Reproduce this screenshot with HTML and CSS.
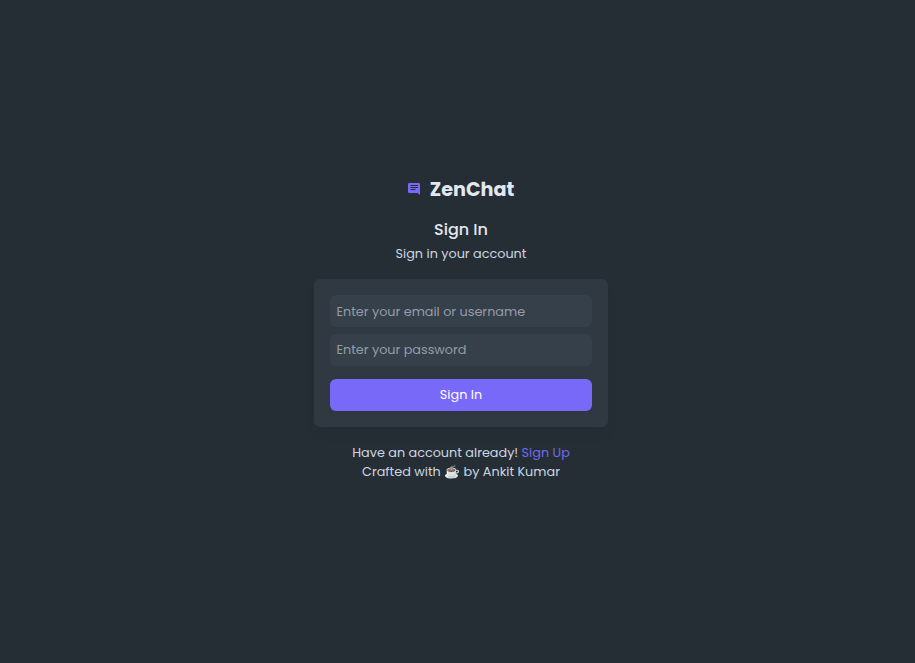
FILE: index.html
```html
<!DOCTYPE html>
<html lang="en">
<head>
<meta charset="utf-8">
<title>ZenChat</title>
<link rel="stylesheet" href="styles.css">
</head>
<body>
<main class="page">
  <header class="brand">
    <svg class="logo" viewBox="0 0 14 14"><path fill="#7869f8" fill-rule="evenodd" d="M2.200 1H11.800Q13 1 13 2.200V13L10.600 11H2.200Q1 11 1 9.800V2.200Q1 1 2.200 1ZM3.500 3.100V3.900H11V3.100ZM3.500 5.100V5.900H11V5.100ZM3.500 7.100V7.900H8.500V7.100Z"/></svg>
    <h1>ZenChat</h1>
  </header>
  <h2>Sign In</h2>
  <p class="subtitle">Sign in your account</p>
  <form class="card">
    <input class="field email" type="text" placeholder="Enter your email or username">
    <input class="field password" type="password" placeholder="Enter your password">
    <button class="submit" type="button">Sign In</button>
  </form>
  <footer class="footer">
    <p>Have an account already! <a href="#">Sign Up</a></p>
    <p>Crafted with ☕ by Ankit Kumar</p>
  </footer>
</main>
</body>
</html>
```
FILE: styles.css
```css
* { box-sizing: border-box; }
body {
  margin: 0;
  background: #262e35;
  color: #cbd5e1;
  font-family: Poppins, Inter, sans-serif;
  font-size: 12.8px;
}
h1, h2, p { margin: 0; }
.page {
  min-height: 663px;
  padding: 174px 0 0 7px;
  display: flex;
  flex-direction: column;
  align-items: center;
}
.brand { display: flex; align-items: center; height: 30px; gap: 8.6px; margin-right: 0.6px; }
.logo { width: 14px; height: 14px; }
h1 { padding-top: 1px; font-size: 19.2px; line-height: 30px; font-weight: 700; color: #e2e8f0; }
h2 { margin-top: 14px; font-size: 16px; line-height: 24px; font-weight: 500; color: #e2e8f0; }
.subtitle { margin-top: 2px; line-height: 20px; }
.card {
  margin-top: 15px;
  width: 294px;
  height: 148px;
  padding: 16px;
  display: flex;
  flex-direction: column;
  background: #303841;
  border-radius: 6px;
  box-shadow: 0 8px 12px -3px rgba(15, 34, 58, .12);
}
.field {
  height: 32px;
  padding: 0 6.4px;
  border: 0;
  border-radius: 6px;
  background: #36404a;
  color: #e2e8f0;
  font: inherit;
}
.field::placeholder { color: #949ba6; opacity: 1; }
.email { padding-top: 1px; }
.password { margin-top: 7px; }
.submit {
  margin-top: 13px;
  height: 32px;
  border: 0;
  border-radius: 6px;
  background: #7869f8;
  color: #fff;
  font: inherit;
}
.footer { margin-top: 16px; text-align: center; line-height: 19px; }
.footer p { white-space: nowrap; }
.footer a { color: #7269ef; text-decoration: none; }
```
